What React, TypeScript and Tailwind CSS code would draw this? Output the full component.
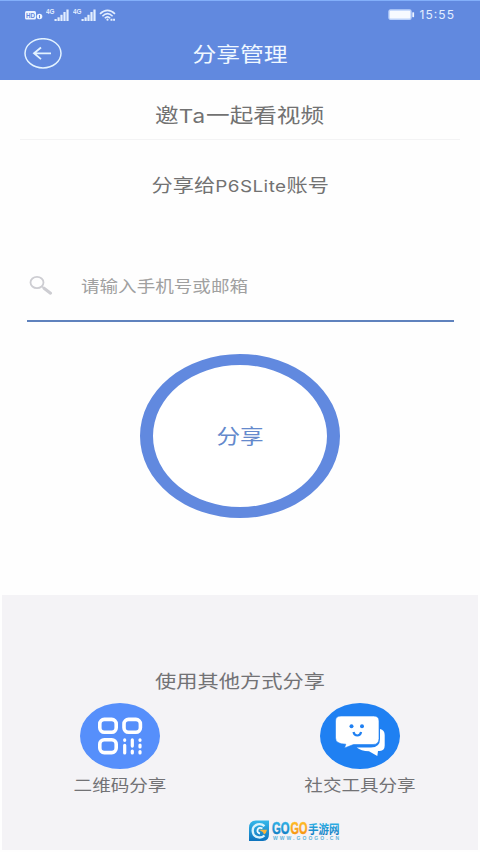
import type { ReactNode } from 'react'

function Signal() {
  return (
    <svg viewBox="0 0 24 14" className="w-6 h-3.5" fill="#e3eeff">
      <text x="0" y="6" fontSize="7.5" fontWeight="700" textLength="8.5" lengthAdjust="spacingAndGlyphs">4G</text>
      <rect x="8.5" y="11" width="2.2" height="2" />
      <rect x="11.5" y="9.3" width="2.2" height="3.7" />
      <rect x="14.4" y="6.8" width="2.2" height="6.2" />
      <rect x="17.4" y="4" width="2.2" height="9" />
      <rect x="20.4" y="1.5" width="2.2" height="11.5" />
    </svg>
  )
}

function StatusBar() {
  return (
    <div className="flex items-center h-7 pl-[24px] pr-[25px]">
      <svg viewBox="0 0 20 14" className="w-5 h-3.5">
        <rect x="1" y="3" width="11" height="8.5" rx="1.5" fill="#edf4ff" />
        <text x="2" y="9.6" fontSize="6.5" fontWeight="700" fill="#6189df" textLength="9" lengthAdjust="spacingAndGlyphs">HD</text>
        <circle cx="15.5" cy="8.5" r="2.8" fill="#edf4ff" />
        <path d="M15.5 7v3.2" stroke="#6189df" strokeWidth="1" />
      </svg>
      <div className="flex gap-[3px] ml-[2px]">
        <Signal />
        <Signal />
      </div>
      <svg viewBox="0 0 18 14" className="w-[18px] h-3.5 ml-[2px]" fill="none" stroke="#e3eeff" strokeWidth="1.6">
        <path d="M1 5.8Q8.5-1.2 16 5.8" />
        <path d="M3.4 8.2Q8.5 3 13.6 8.2" />
        <path d="M5.8 10.3Q8.5 7.5 11.2 10.3" />
        <circle cx="8.5" cy="11.7" r="1.1" fill="#e3eeff" stroke="none" />
        <path d="M11.5 11.8h4.5" strokeWidth="2" strokeDasharray="2 0.6" />
      </svg>
      <svg viewBox="0 0 27 12" className="w-[27px] h-3 ml-auto">
        <rect x="1" y="1" width="22" height="9.2" rx="1.5" fill="#f7faff" stroke="#bcd2fb" strokeWidth="1.4" />
        <rect x="24.3" y="3.2" width="1.8" height="5" rx="0.6" fill="#edf4ff" />
      </svg>
      <svg viewBox="0 0 36 14" className="w-9 h-3.5 ml-[4px]">
        <text x="0.5" y="11" fontSize="12" fill="#e3eeff" fontFamily="Inter" textLength="34.5" lengthAdjust="spacing">15:55</text>
      </svg>
    </div>
  )
}

function QrIcon() {
  return (
    <svg viewBox="0 0 80 66" className="w-20 h-[66px]">
      <ellipse cx="40" cy="33" rx="40" ry="33" fill="#568ffb" />
      <g fill="none" stroke="#fff" strokeWidth="3.6">
        <rect x="19.8" y="16.4" width="16.4" height="12.8" rx="4.5" />
        <rect x="44" y="16.4" width="16.4" height="12.8" rx="4.5" />
        <rect x="19.8" y="36.8" width="16.4" height="12.8" rx="4.5" />
      </g>
      <path
        d="M44.7 36.9v.4M44.7 42.3v7.7M52.3 36.9v6.2M52.3 48v2M60 36.9v.4M60 42v2M60 48.500v1.500"
        stroke="#fff"
        strokeWidth="3.2"
        strokeLinecap="round"
      />
    </svg>
  )
}

function ChatIcon() {
  return (
    <svg viewBox="0 0 80 66" className="w-20 h-[66px]">
      <ellipse cx="40" cy="33" rx="40" ry="33" fill="#1f80f2" />
      <path d="M60 26q4.700.8 4.700 6v10.500q0 5-5 5.500h-1.700l-.7 5-8.300-4.700q-8 0-12.300-3.700H51q9-.2 9-8.600z" fill="#fff" />
      <path
        d="M21 13H53.500q5.500 0 5.500 5v17.500q0 6-6 6H33.500l-9 3.500 1.300-3.800q-10.300-.2-10.300-6.200V18q0-5 5.500-5z"
        fill="#fff"
        stroke="#1f80f2"
        strokeWidth="0.6"
      />
      <circle cx="31.5" cy="23.3" r="2" fill="#1f80f2" />
      <circle cx="42" cy="23.3" r="2" fill="#1f80f2" />
      <path d="M33.500 29q.8 3.500 3.800 3.500t3.800-3.500" fill="none" stroke="#1f80f2" strokeWidth="2.2" />
    </svg>
  )
}

function SiteLogo() {
  return (
    <svg viewBox="0 0 92 24" className="w-[92px] h-6 overflow-visible">
      <defs>
        <linearGradient id="blue" x1="0" y1="0" x2="0" y2="1">
          <stop offset="0" stopColor="#35b8ea" />
          <stop offset="1" stopColor="#0d73bd" />
        </linearGradient>
        <linearGradient id="orange" x1="0" y1="0" x2="0" y2="1">
          <stop offset="0" stopColor="#ffc229" />
          <stop offset="1" stopColor="#f58a0c" />
        </linearGradient>
      </defs>
      <path d="M8 1.500H21V15q0 7-6 7H1V9q0-7.500 7-7.500z" fill="url(#blue)" />
      <path d="M16.500 7.200Q13.500 4.300 9.500 5.400 4.500 7 4.700 12t5 6.200q4 1 6.800-1.700" fill="none" stroke="#d9f3fc" strokeWidth="2.300" />
      <path d="M14.500 9.300q-4-1.500-5 1.700-.5 3 2.500 3.500" fill="none" stroke="#eefaff" strokeWidth="1.800" />
      <path d="M11 10.800h8q-.5 3.500-3 4.700l-1-2.200z" fill="#f9b53a" />
      <text x="24" y="15.3" fontSize="16" fontWeight="700" fill="url(#blue)" stroke="url(#blue)" strokeWidth="0.5" textLength="17.5" lengthAdjust="spacingAndGlyphs">GO</text>
      <text x="42.5" y="15.3" fontSize="16" fontWeight="700" fill="url(#orange)" stroke="url(#orange)" strokeWidth="0.5" textLength="17" lengthAdjust="spacingAndGlyphs">GO</text>
      <text x="60" y="14.5" fontSize="12.5" fontWeight="700" fill="url(#blue)" textLength="31.5" lengthAdjust="spacingAndGlyphs">手游网</text>
      <text x="25" y="21.3" fontSize="5" fontWeight="700" fill="#5fb4dc" textLength="66" lengthAdjust="spacing">WWW.GOOGO.CN</text>
    </svg>
  )
}

function ShareOption({ icon, label }: { icon: ReactNode; label: string }) {
  return (
    <button className="flex flex-col items-center w-[120px]">
      {icon}
      <span className="mt-[5px] h-6 leading-6 text-[16px] text-[#727275] whitespace-nowrap scale-x-[1.16]">{label}</span>
    </button>
  )
}

export default function App() {
  return (
    <div className="flex flex-col w-[480px] h-[852px] overflow-hidden bg-[#fefefe] font-normal font-['Liberation_Sans','Noto_Sans_CJK_SC',sans-serif]">
      <header className="h-20 bg-[#6189df] border-t border-[#82affa] shrink-0">
        <StatusBar />
        <div className="grid grid-cols-[80px_1fr_80px] items-center h-[50px]">
          <button className="pl-6">
            <svg viewBox="0 0 38 32" className="w-[38px] h-8" fill="none" stroke="#e3f3ff">
              <ellipse cx="19" cy="15.3" rx="18" ry="14.6" strokeWidth="1.5" />
              <path d="M27 15.300H10.500M17 9.500L10 15.300l7 5.800" strokeWidth="1.8" />
            </svg>
          </button>
          <h1 className="pt-0.5 text-center text-[20px] font-normal text-[#f0f8ff] scale-x-[1.19]">分享管理</h1>
        </div>
      </header>

      <main className="flex flex-col items-center h-[515px] shrink-0">
        <div className="flex items-center justify-center w-[440px] h-[60px] pt-3.5 border-b border-[#f3f3f4]">
          <h2 className="text-[20px] font-normal text-[#727272] whitespace-nowrap scale-x-[1.18]">
            邀<span className="font-['Inter'] text-[19px] tracking-[0.8px]">Ta</span>一起看视频
          </h2>
        </div>
        <p className="mt-[34px] h-6 leading-6 text-[18px] text-[#727272] whitespace-nowrap scale-x-[1.18]">
          分享给<span className="font-['Inter'] text-[16px] tracking-[0.4px]">P6SLite</span>账号
        </p>
        <label className="flex items-center w-[427px] h-[69px] mt-[55px] border-b-2 border-[#5f82bd]">
          <svg viewBox="0 0 24 20" className="w-6 h-5 ml-[2px] -mt-1" fill="none" stroke="#cdcdd2">
            <ellipse cx="8" cy="7.5" rx="6.5" ry="5.6" strokeWidth="1.8" />
            <path d="M13 11.500l2 1.700" strokeWidth="1.5" />
            <path d="M15 13.200l6.500 5" strokeWidth="3" strokeLinecap="round" />
          </svg>
          <span className="ml-[28px] text-[16px] text-[#a0a0a0] whitespace-nowrap origin-left scale-x-[1.16]">请输入手机号或邮箱</span>
        </label>
        <button className="flex items-center justify-center w-[200px] h-[164px] mt-8 rounded-[50%] border-x-[13px] border-y-[11px] border-[#6189df] bg-white">
          <span className="pt-0.5 text-[20px] text-[#6489cc] scale-x-[1.18]">分享</span>
        </button>
      </main>

      <footer className="flex flex-col items-center h-[255px] mx-[2px] bg-[#f4f3f6] shrink-0">
        <p className="mt-[75px] h-6 leading-6 text-[18px] text-[#727275] whitespace-nowrap scale-x-[1.18]">使用其他方式分享</p>
        <div className="flex justify-between w-[360px] mt-[9px]">
          <ShareOption icon={<QrIcon />} label="二维码分享" />
          <ShareOption icon={<ChatIcon />} label="社交工具分享" />
        </div>
        <div className="mt-[21px] ml-[108px]">
          <SiteLogo />
        </div>
      </footer>
    </div>
  )
}
